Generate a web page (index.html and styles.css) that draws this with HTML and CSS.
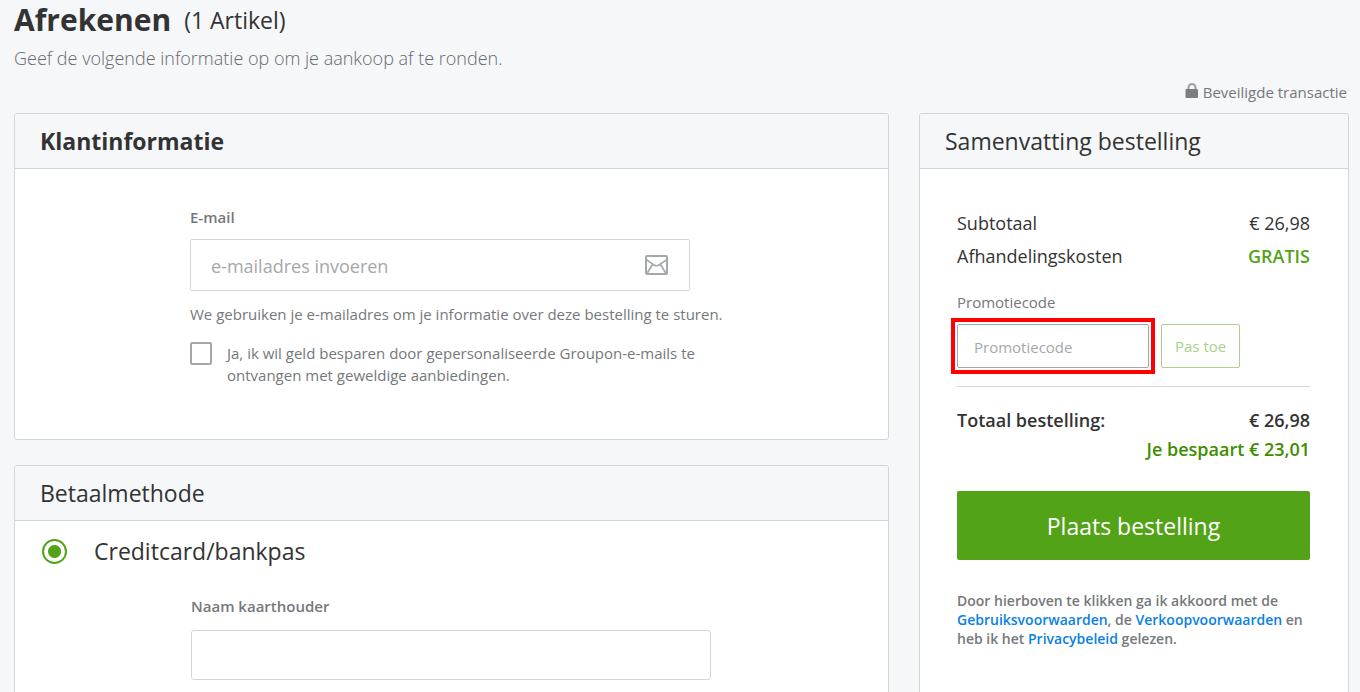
FILE: index.html
```html
<!DOCTYPE html>
<html lang="nl">
<head>
<meta charset="utf-8">
<meta name="viewport" content="width=device-width, initial-scale=1">
<title>Afrekenen</title>
<link rel="stylesheet" href="styles.css">
</head>
<body>
<div class="page">
  <header class="page-header">
    <h1 class="page-title">Afrekenen <span class="item-count">(1 Artikel)</span></h1>
    <p class="page-intro">Geef de volgende informatie op om je aankoop af te ronden.</p>
    <p class="secure">
      <svg class="lock-icon" viewBox="0 0 14 16" aria-hidden="true"><path d="M3.500 8V5.500a3.500 3.500 0 0 1 7 0V8" fill="none" stroke="#9a9c9e" stroke-width="2"/><rect x="0.500" y="7" width="12.500" height="9" rx="1" fill="#7b7e80"/></svg>
      <span>Beveiligde transactie</span>
    </p>
  </header>

  <div class="columns">
    <main class="forms">
      <section class="panel">
        <h2 class="panel-title panel-title-strong">Klantinformatie</h2>
        <div class="customer">
          <label class="field-label" for="email">E-mail</label>
          <div class="email-field">
            <input class="email-input" id="email" type="email" placeholder="e-mailadres invoeren">
            <svg class="mail-icon" viewBox="0 0 23 20" fill="none" stroke="#a5a8ab" stroke-width="2" aria-hidden="true"><rect x="1" y="1" width="21" height="18" rx="1"/><path d="M1 4.500C4 7 7 8 9 10q2.500 1.500 5 0C16 8 19 7 22 4.500M7.500 9.500 2 18.500M15.500 9.500 21 18.500" stroke-width="1.700"/></svg>
          </div>
          <p class="hint">We gebruiken je e-mailadres om je informatie over deze bestelling te sturen.</p>
          <label class="optin">
            <input class="checkbox" type="checkbox">
            <span>Ja, ik wil geld besparen door gepersonaliseerde Groupon-e-mails te ontvangen met geweldige aanbiedingen.</span>
          </label>
        </div>
      </section>

      <section class="panel panel-last">
        <h2 class="panel-title">Betaalmethode</h2>
        <div class="payment">
          <label class="method">
            <input class="radio" type="radio" name="method" checked>
            <span>Creditcard/bankpas</span>
          </label>
          <div class="card-form">
            <label class="field-label" for="holder">Naam kaarthouder</label>
            <input class="card-input" id="holder" type="text">
          </div>
        </div>
      </section>
    </main>

    <aside class="panel">
      <h2 class="panel-title">Samenvatting bestelling</h2>
      <div class="summary">
        <div class="line"><span>Subtotaal</span><span>€ 26,98</span></div>
        <div class="line"><span>Afhandelingskosten</span><span class="free">GRATIS</span></div>
        <form class="promo">
          <label class="promo-label" for="promo">Promotiecode</label>
          <div class="promo-row">
            <div class="promo-highlight">
              <input class="promo-input" id="promo" type="text" placeholder="Promotiecode">
            </div>
            <button class="promo-button" type="button">Pas toe</button>
          </div>
        </form>
        <div class="line line-total"><span>Totaal bestelling:</span><span>€ 26,98</span></div>
        <p class="saving">Je bespaart € 23,01</p>
        <button class="order-button" type="button">Plaats bestelling</button>
        <p class="legal">Door hierboven te klikken ga ik akkoord met de <a href="#">Gebruiksvoorwaarden</a>, de <a href="#">Verkoopvoorwaarden</a> en heb ik het <a href="#">Privacybeleid</a> gelezen.</p>
      </div>
    </aside>
  </div>
</div>
</body>
</html>
```
FILE: styles.css
```css
* {
  box-sizing: border-box;
}

body {
  margin: 0;
  background: #f6f7f9;
  color: #333;
  font-family: "Open Sans", "Noto Sans", sans-serif;
  font-size: 15px;
  line-height: 20px;
}

h1, h2, p {
  margin: 0;
}

input, button {
  font: inherit;
  border-radius: 2px;
}

.page {
  padding: 0 11px 0 14px;
}

.page-title {
  display: flex;
  align-items: center;
  gap: 13px;
  font-size: 30px;
  font-weight: 700;
  line-height: 40px;
}

.item-count {
  font-size: 23px;
  font-weight: 400;
}

.page-intro {
  margin-top: 6px;
  color: #666a6d;
  font-size: 18px;
  font-weight: 300;
  line-height: 24px;
}

.secure {
  display: flex;
  justify-content: flex-end;
  gap: 4px;
  margin: 12px 0 11px;
  padding-right: 2px;
  color: #75787b;
}

.lock-icon {
  width: 14px;
  height: 16px;
}

.columns {
  display: grid;
  grid-template-columns: minmax(0, 1fr) 430px;
  gap: 30px;
}

.forms {
  display: flex;
  flex-direction: column;
  gap: 25px;
}

.panel {
  border: 1px solid #d3d6d9;
  border-radius: 3px;
  background: #fff;
}

.panel-title {
  padding: 11px 25px;
  border-bottom: 1px solid #d3d6d9;
  border-radius: 2px 2px 0 0;
  background: #f6f7f9;
  font-size: 23px;
  font-weight: 400;
  line-height: 32px;
}

.panel-title-strong {
  font-weight: 700;
}

.panel-last {
  padding-bottom: 40px;
}

.customer {
  max-width: 740px;
  padding: 38px 0 53px 175px;
}

.field-label {
  display: block;
  color: #75787b;
  font-weight: 600;
}

.email-field {
  position: relative;
  max-width: 500px;
  margin: 12px 0 13px;
}

.email-input {
  display: block;
  width: 100%;
  height: 52px;
  padding: 2px 60px 0 20px;
  border: 1px solid #d3d6d9;
  font-size: 18px;
}

::placeholder {
  color: #a5a8ab;
}

.mail-icon {
  position: absolute;
  top: 16px;
  right: 22px;
  width: 23px;
  height: 20px;
}

.hint {
  color: #75787b;
}

.optin {
  display: flex;
  gap: 15px;
  max-width: 530px;
  margin-top: 18px;
  color: #75787b;
  line-height: 22px;
}

.checkbox,
.radio {
  flex: none;
  margin: 0;
  appearance: none;
  border: 2px solid #a5a8ab;
  background: #fff;
}

.checkbox {
  width: 22px;
  height: 23px;
}

.checkbox:checked {
  background: #53a318;
}

.payment {
  padding: 14px 27px 0;
}

.method {
  display: flex;
  align-items: center;
  gap: 27px;
  font-size: 23px;
  line-height: 32px;
}

.radio {
  width: 25px;
  height: 25px;
  border-radius: 50%;
}

.radio:checked {
  border-color: #53a318;
  background: radial-gradient(circle, #53a318 6px, #fff 7px);
}

.card-form {
  padding: 29px 0 0 149px;
}

.card-input {
  display: block;
  width: 100%;
  max-width: 520px;
  height: 50px;
  margin-top: 14px;
  padding: 0 20px;
  border: 1px solid #d3d6d9;
  border-radius: 3px;
  font-size: 18px;
}

.summary {
  display: flex;
  flex-direction: column;
  padding: 42px 38px 60px 37px;
}

.line {
  display: flex;
  justify-content: space-between;
  margin-bottom: 9px;
  font-size: 18px;
  line-height: 24px;
}

.free {
  color: #53a318;
  font-weight: 600;
}

.promo {
  margin-top: 15px;
  padding-bottom: 18px;
  border-bottom: 1px solid #d3d6d9;
}

.promo-label {
  color: #75787b;
}

.promo-row {
  display: flex;
  gap: 12px;
  margin-top: 12px;
}

.promo-highlight {
  width: 192px;
  outline: 4px solid #f00;
  outline-offset: 2px;
}

.promo-input {
  display: block;
  width: 100%;
  height: 44px;
  padding: 2px 16px 0;
  border: 1px solid #a5a8ab;
}

.promo-button {
  height: 44px;
  padding: 0 13px;
  border: 1px solid #a9d18b;
  background: #fff;
  color: #a9d18b;
}

.line-total {
  margin: 21px 0 5px;
  font-weight: 600;
}

.saving {
  color: #3e8e00;
  font-size: 18px;
  font-weight: 600;
  line-height: 24px;
  text-align: right;
}

.order-button {
  height: 69px;
  margin: 30px 0 31px;
  border: 0;
  background: #53a318;
  color: #fff;
  font-size: 23px;
}

.legal {
  color: #75787b;
  font-size: 14px;
  font-weight: 600;
  line-height: 19px;
}

.legal a {
  color: #0981e5;
  text-decoration: none;
}
```
